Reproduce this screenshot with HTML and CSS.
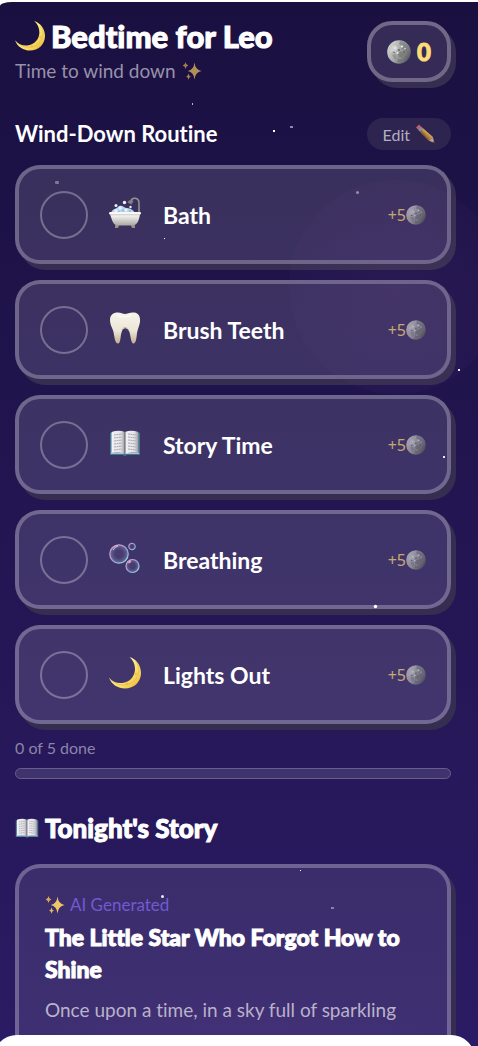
FILE: index.html
```
<!DOCTYPE html>
<html lang="en">
	<head>
		<meta charset="UTF-8">
		<meta name="viewport" content="width=device-width, initial-scale=1">
		<title>Bedtime for Leo</title>
		<link rel="stylesheet" href="styles.css">
	</head>
	<body>
		<!-- shared icons -->
		<svg class="defs" aria-hidden="true">
			<defs>
				<linearGradient id="gold" x1="0" y1="0" x2="1" y2="1">
					<stop offset="0.4" stop-color="#fff08e"/>
					<stop offset="0.75" stop-color="#f8d458"/>
					<stop offset="1" stop-color="#d9a530"/>
				</linearGradient>
				<linearGradient id="rock" x1="0" y1="0.2" x2="1" y2="0.8">
					<stop offset="0" stop-color="#d6d7d5"/>
					<stop offset="0.5" stop-color="#a6a8a7"/>
					<stop offset="1" stop-color="#4d4e50"/>
				</linearGradient>
				<linearGradient id="tub" x1="0" y1="0" x2="0" y2="1">
					<stop offset="0" stop-color="#ffffff"/>
					<stop offset="1" stop-color="#aaa6a0"/>
				</linearGradient>
				<linearGradient id="enamel" x1="0" y1="0" x2="0" y2="1">
					<stop offset="0" stop-color="#f7f4e9"/>
					<stop offset="0.6" stop-color="#ebe6d6"/>
					<stop offset="1" stop-color="#c4ad8c"/>
				</linearGradient>
				<linearGradient id="page" x1="0" y1="0" x2="1" y2="0">
					<stop offset="0" stop-color="#f3f2f5"/>
					<stop offset="0.7" stop-color="#e2e1e6"/>
					<stop offset="1" stop-color="#96959d"/>
				</linearGradient>
				<linearGradient id="rim" x1="0" y1="0" x2="1" y2="1">
					<stop offset="0" stop-color="#eba6d0"/>
					<stop offset="0.5" stop-color="#9c9fd0"/>
					<stop offset="1" stop-color="#8ce0e4"/>
				</linearGradient>
				<radialGradient id="film">
					<stop offset="0.4" stop-color="#8e86b8" stop-opacity="0.1"/>
					<stop offset="1" stop-color="#a8b8dc" stop-opacity="0.45"/>
				</radialGradient>
			</defs>
			<symbol id="i-crescent" viewBox="0 0 32 32">
				<path d="M20.500 0C28 2.500 32 9 32 16C32 25 25 31.500 16 31.500C9 31.500 2.500 27.500 0 20.500C3 24.500 8 26.500 13 26C21 25.500 26 19 26 12C26 7 24 3 20.500 0Z" fill="url(#gold)"/>
				<path d="M1 22C7 29 19 30.500 26 23C31 18 31 9 27 5" fill="none" stroke="#dcae3e" stroke-width="1" opacity="0.55"/>
				<circle cx="27" cy="17" r="1.300" fill="#e2b544" opacity="0.6"/>
				<circle cx="18" cy="27" r="1.400" fill="#e2b544" opacity="0.6"/>
			</symbol>
			<symbol id="i-moon" viewBox="0 0 24 24">
				<circle cx="12" cy="12" r="11.800" fill="url(#rock)"/>
				<path d="M13 1C18 1 22 5 23 10L20 13L17 9L14 10L15 6L12 4Z" fill="#77797b" opacity="0.6"/>
				<path d="M5 6L9 5L11 8L9 12L6 11L3 13Z" fill="#e2e3e1" opacity="0.5"/>
				<path d="M14 11L17 14L14 18L15 22L10 22L12 17L10 14Z" fill="#6d6e70" opacity="0.55"/>
				<path d="M5 15L8 14L10 17L8 20Z" fill="#7d7f80" opacity="0.5"/>
				<g fill="#eff0ee">
					<circle cx="15" cy="6.500" r="1.100"/>
					<circle cx="10.500" cy="13" r="1"/>
					<circle cx="18" cy="8.500" r="0.700"/>
					<circle cx="8" cy="8" r="0.900"/>
					<circle cx="13" cy="18" r="0.600"/>
				</g>
				<g fill="#5d5e60">
					<circle cx="12" cy="10" r="0.900"/>
					<circle cx="7" cy="12.500" r="0.700"/>
					<circle cx="17" cy="12" r="0.900"/>
				</g>
			</symbol>
			<symbol id="i-sparkles" viewBox="0 0 20 20">
				<path d="M12.500 1.500Q13.200 8.800 19.500 10Q13.200 11.200 12.500 18.500Q11.800 11.200 5.800 10Q11.800 8.800 12.500 1.500Z" fill="#f0c765"/>
				<path d="M3.500 1Q3.900 4 6.300 4.400Q3.900 4.900 3.500 8Q3.100 4.900 0.700 4.400Q3.100 4 3.500 1Z" fill="#dda94f"/>
				<path d="M6.500 12.500Q6.900 15 9 15.500Q6.900 16 6.500 18.800Q6.100 16 4 15.500Q6.100 15 6.500 12.500Z" fill="#e8b95a"/>
			</symbol>
			<symbol id="i-pencil" viewBox="0 0 20 20">
				<path d="M1 3.500L4 0.500L6.500 3L3.500 6Z" fill="#d9707e"/>
				<path d="M3.200 5.800L6.300 2.700L8.200 4.600L5.100 7.700Z" fill="#a3a7b4"/>
				<path d="M5.100 7.700L8.200 4.600L17.800 13L14 16.800Z" fill="#d99d3b"/>
				<path d="M5.100 7.700L6.200 6.600L15 15.800L14 16.800Z" fill="#ae742b"/>
				<path d="M7 5.800L8.200 4.600L17.800 13L16.700 14Z" fill="#efbd5f"/>
				<path d="M14 16.800L17.800 13L19.500 19Z" fill="#dfc09a"/>
				<path d="M17.800 18.400L19 17L19.500 19Z" fill="#403735"/>
			</symbol>
			<symbol id="i-bath" viewBox="0 0 32 32">
				<path d="M30 17V6C30 0 22.500 0 22 4" fill="none" stroke="#94918f" stroke-width="1.600"/>
				<path d="M18.500 5.500Q20 1.500 24.500 3.800L22.500 7.500Z" fill="#85827f"/>
				<path d="M2 16C3 12 7 12 9 10C12 7 15 10 17 11C20 11 24 12 26 16Z" fill="#bbd5ed"/>
				<g fill="#e8f4fd">
					<circle cx="7" cy="8.500" r="1.500"/>
					<circle cx="15.500" cy="5.500" r="1.700"/>
					<circle cx="21.500" cy="10" r="1.200"/>
					<circle cx="11" cy="11" r="1.700"/>
					<circle cx="7" cy="13.500" r="1.500"/>
					<circle cx="17" cy="13" r="1.500"/>
				</g>
				<g fill="#8fb4da">
					<circle cx="14" cy="13.500" r="1"/>
					<circle cx="10" cy="14.500" r="0.800"/>
					<circle cx="21" cy="14" r="1"/>
				</g>
				<path d="M6 28.500L8 26H11L9 31H6ZM26 28.500L24 26H21L23 31H26Z" fill="#95918d"/>
				<path d="M1 17H31C30 24 28 28.500 23 28.500H9C4 28.500 3 23 1 17Z" fill="url(#tub)"/>
				<rect x="0" y="15" width="32" height="2.600" rx="1.300" fill="#f8f7f5"/>
				<path d="M1 17.800H31" stroke="#aaa6a3" stroke-width="0.600"/>
			</symbol>
			<symbol id="i-tooth" viewBox="0 0 32 32">
				<path d="M9 0.500C12 0.500 13.500 2 16 2C18.500 2 21 0 25 0.500C30 1 31.500 5 31 10C30.500 14 28.500 17 28 21C27.500 26 27 31.500 24.500 31.500C21.500 31.500 22 23 20 19C18.500 15.500 14.500 15 13 19C11 24 12 31.500 9 31.500C6 31.500 5.500 25 4.500 20C3.500 16 1 13 1 8C1 3 4 0.500 9 0.500Z" fill="url(#enamel)"/>
				<path d="M8 3Q15 7 23 3" fill="none" stroke="#ffffff" stroke-width="1.500" opacity="0.6"/>
				<path d="M13 18C15 14 18 15 20 19" fill="none" stroke="#b29c7d" stroke-width="0.700"/>
			</symbol>
			<symbol id="i-book" viewBox="0 0 32 32">
				<path d="M1 6H31V28H18Q16 30 14 28H1Z" fill="#42758f"/>
				<path d="M2 25.500H30V27H2Z" fill="#a8c2ce"/>
				<path d="M2.500 5Q10 2.500 16 5V27Q10 24 2.500 26Z" fill="url(#page)"/>
				<path d="M29.500 5Q22 2.500 16 5V27Q22 24 29.500 26Z" fill="url(#page)"/>
				<path d="M16 5V27" stroke="#615f69" stroke-width="1"/>
				<path d="M5 8L13 7M5 11L13 10M5 14L13 13M5 17L13 16M5 20L13 19M5 23L13 22M19 7L27 8M19 10L27 11M19 13L27 14M19 16L27 17M19 19L27 20M19 22L27 23" stroke="#99979f" stroke-width="0.800" stroke-dasharray="2 0.500"/>
			</symbol>
			<symbol id="i-bubbles" viewBox="0 0 32 32">
				<g fill="url(#film)" stroke="url(#rim)">
					<circle cx="10" cy="12" r="9.200" stroke-width="1.200"/>
					<circle cx="23.500" cy="24" r="6.500" stroke-width="1.200"/>
					<circle cx="23" cy="4.500" r="3.300" stroke-width="1"/>
				</g>
				<path d="M4 8Q6 4.500 9 4" fill="none" stroke="#ffffff" stroke-width="1" opacity="0.7"/>
				<path d="M19.500 21Q21 19.500 22 19.300" fill="none" stroke="#f7a7ce" stroke-width="1.400"/>
			</symbol>
		</svg>

		<div class="screen">
			<div class="glow"></div>
			<div class="glow glow-low"></div>

			<header class="top">
				<div>
					<h1><svg class="title-icon"><use href="#i-crescent"/></svg>Bedtime for Leo</h1>
					<p class="subtitle">Time to wind down <svg class="icon-20"><use href="#i-sparkles"/></svg></p>
				</div>
				<div class="coins"><svg class="icon-24"><use href="#i-moon"/></svg>0</div>
			</header>

			<main>
				<section>
					<div class="section-head">
						<h2>Wind-Down Routine</h2>
						<button class="edit" type="button">Edit <svg class="icon-20"><use href="#i-pencil"/></svg></button>
					</div>
					<ul class="routine">
						<li>
							<label class="card task">
								<input type="checkbox">
								<svg class="task-icon"><use href="#i-bath"/></svg>
								<span class="name">Bath</span>
								<span class="reward">+5<svg class="icon-20"><use href="#i-moon"/></svg></span>
							</label>
						</li>
						<li>
							<label class="card task">
								<input type="checkbox">
								<svg class="task-icon"><use href="#i-tooth"/></svg>
								<span class="name">Brush Teeth</span>
								<span class="reward">+5<svg class="icon-20"><use href="#i-moon"/></svg></span>
							</label>
						</li>
						<li>
							<label class="card task">
								<input type="checkbox">
								<svg class="task-icon"><use href="#i-book"/></svg>
								<span class="name">Story Time</span>
								<span class="reward">+5<svg class="icon-20"><use href="#i-moon"/></svg></span>
							</label>
						</li>
						<li>
							<label class="card task">
								<input type="checkbox">
								<svg class="task-icon"><use href="#i-bubbles"/></svg>
								<span class="name">Breathing</span>
								<span class="reward">+5<svg class="icon-20"><use href="#i-moon"/></svg></span>
							</label>
						</li>
						<li>
							<label class="card task">
								<input type="checkbox">
								<svg class="task-icon"><use href="#i-crescent"/></svg>
								<span class="name">Lights Out</span>
								<span class="reward">+5<svg class="icon-20"><use href="#i-moon"/></svg></span>
							</label>
						</li>
					</ul>
					<p class="done">0 of 5 done</p>
					<div class="bar"></div>
				</section>

				<section>
					<h2 class="story-head"><svg class="icon-24"><use href="#i-book"/></svg>Tonight's Story</h2>
					<article class="card story">
						<p class="tag"><svg class="icon-20"><use href="#i-sparkles"/></svg>AI Generated</p>
						<h3>The Little Star Who Forgot How to Shine</h3>
						<p class="text">Once upon a time, in a sky full of sparkling</p>
					</article>
				</section>
			</main>

			<!-- stars float above everything -->
			<svg class="stars" aria-hidden="true">
				<g fill="#ffffff">
					<rect x="192" y="103" width="1" height="2" opacity="0.7"/>
					<rect x="273" y="130" width="2" height="2"/>
					<rect x="290" y="126" width="3" height="2" opacity="0.5"/>
					<rect x="55" y="181" width="4" height="3" rx="1" opacity="0.35"/>
					<circle cx="357.500" cy="192.500" r="1.500" opacity="0.45"/>
					<rect x="164" y="238" width="1" height="1"/>
					<rect x="458" y="369" width="2" height="2" opacity="0.9"/>
					<rect x="443" y="456" width="2" height="2" opacity="0.9"/>
					<circle cx="375.500" cy="606.500" r="1.700"/>
					<rect x="300" y="870" width="1" height="1"/>
					<circle cx="162.500" cy="896.500" r="1.500" opacity="0.9"/>
					<rect x="331" y="907" width="3" height="2" opacity="0.4"/>
				</g>
			</svg>
			<div class="sheet"></div>
		</div>
	</body>
</html>
```
FILE: styles.css
```
*{
	box-sizing: border-box;
	margin: 0;
	padding: 0;
}
body{
	padding-top: 2px;
	background: #fff;
	color: #fff;
	font-family: Lato, sans-serif;
	font-variant-ligatures: none;
}
ul{
	list-style: none;
}
svg{
	flex: none;
}
.defs{
	position: absolute;
	width: 0;
	height: 0;
}
.screen{
	position: relative;
	height: calc(100vh - 2px);
	overflow: hidden;
	padding: 19px 27px 0 15px;
	border-top-left-radius: 12px 4px;
	background: linear-gradient(#1a1040, #2b1b64);
}
.icon-20{
	width: 20px;
	height: 20px;
}
.icon-24{
	width: 24px;
	height: 24px;
}

/* header */
.top{
	display: flex;
	justify-content: space-between;
	align-items: flex-start;
}
h1, h3, .story-head{
	font-weight: 900;
	-webkit-text-stroke: 1px #fff;
}
h1{
	display: flex;
	align-items: center;
	gap: 6px;
	margin-bottom: 10px;
	font-size: 31px;
	line-height: 28px;
}
.title-icon{
	width: 30px;
	height: 30px;
}
.subtitle{
	display: flex;
	align-items: center;
	gap: 6px;
	color: #9792aa;
	font-size: 19px;
	line-height: 20px;
}
.subtitle svg{
	opacity: 0.7;
}
.coins{
	display: flex;
	align-items: center;
	gap: 6px;
	height: 61px;
	padding: 0 16px;
	border: 4px solid #706886;
	border-radius: 25px;
	background: #342b57;
	box-shadow: 5px 6px 0 #352e50;
	color: #ffdb78;
	font-size: 24px;
	font-weight: 900;
	-webkit-text-stroke: 1px #ffdb78;
}

/* routine */
.section-head{
	display: flex;
	justify-content: space-between;
	align-items: center;
	margin-top: 36px;
}
h2{
	font-size: 22px;
	font-weight: 700;
	line-height: 30px;
}
.edit{
	display: flex;
	align-items: center;
	gap: 5px;
	height: 32px;
	padding: 0 16px;
	border: 0;
	border-radius: 16px;
	background: #2d2450;
	color: #b3aec2;
	font-family: inherit;
	font-size: 16px;
}
.edit svg{
	opacity: 0.8;
}
.routine{
	display: grid;
	gap: 16px;
	margin-top: 15px;
}
.card{
	border: 4px solid rgba(255,255,255,0.26);
	border-radius: 25px;
	background: rgba(255,255,255,0.13);
	background-clip: border-box;
	box-shadow: 5px 6px 0 #352e50;
}
.task{
	display: flex;
	align-items: center;
	height: 99px;
	padding: 0 21px;
}
.task input{
	appearance: none;
	flex: none;
	width: 48px;
	height: 48px;
	border: 2px solid rgba(255,255,255,0.3);
	border-radius: 50%;
}
.task input:checked{
	background: #ffdb78;
}
.task-icon{
	width: 32px;
	height: 32px;
	margin: 0 22px 4px 21px;
}
.name{
	flex: 1;
	font-size: 23px;
	font-weight: 700;
}
.reward{
	display: flex;
	align-items: center;
	color: #ffdb78;
	font-family: "Noto Sans", sans-serif;
	font-size: 16px;
	opacity: 0.7;
}
.done{
	margin-top: 14px;
	color: #8c84a9;
	font-size: 16px;
	line-height: 20px;
}
.bar{
	height: 11px;
	margin-top: 10px;
	border: 1px solid #685e8b;
	border-radius: 6px;
	background: #3e336c;
}

/* story */
.story-head{
	display: flex;
	align-items: center;
	gap: 6px;
	margin-top: 34px;
	font-size: 26px;
}
.story{
	height: 300px;
	margin-top: 21px;
	padding: 27px 26px;
	background: rgba(255,255,255,0.09);
}
.tag{
	display: flex;
	align-items: center;
	gap: 5px;
	color: #6f5bd0;
	font-size: 17px;
	line-height: 20px;
}
h3{
	margin: 6px 0 10px;
	font-size: 23px;
	line-height: 32px;
}
.text{
	color: #bab4cb;
	font-size: 19px;
	line-height: 30px;
}

/* decoration */
.glow{
	position: absolute;
	top: 178px;
	left: 289px;
	width: 214px;
	height: 214px;
	border-radius: 50%;
	background: radial-gradient(circle, rgba(140,80,170,0.1), rgba(140,80,170,0.04) 70%);
}
.glow-low{
	top: 980px;
	left: -20px;
	width: 520px;
	background: radial-gradient(closest-side, rgba(140,80,190,0.12), transparent);
}
.stars{
	position: absolute;
	top: -2px;
	left: 0;
	width: 100%;
	height: 100%;
	pointer-events: none;
}
.sheet{
	position: absolute;
	right: 3px;
	bottom: -19px;
	left: -7px;
	height: 30px;
	border-radius: 24px 24px 0 0;
	background: #fff;
}
```
